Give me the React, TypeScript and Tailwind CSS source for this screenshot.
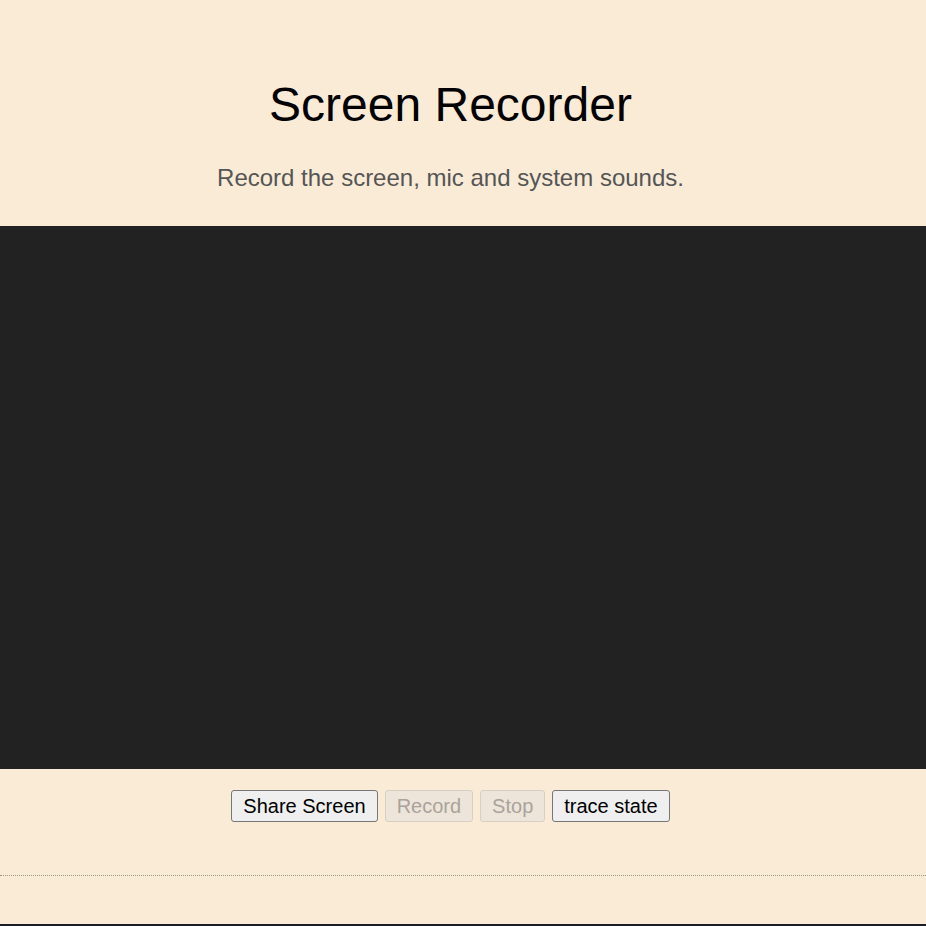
export default function App() {
    const btn = "h-[32px] px-[11px] text-[20px] rounded-[3px] border leading-none";
    return (
        <div className="min-h-[926px] h-[926px] bg-[#faebd7] flex flex-col overflow-hidden" style={{ fontFamily: '"Liberation Sans", Arial, sans-serif' }}>
            {/* Header */}
            <div className="w-[901px] text-center">
                <h1 className="mt-[77px] text-[48px] leading-[55px] text-black">Screen Recorder</h1>
                <p className="mt-[32px] text-[24px] leading-[28px] text-[#555]">Record the screen, mic and system sounds.</p>
            </div>

            {/* Video preview */}
            <div className="mt-[34px] h-[543px] w-full bg-[#222222]"></div>

            {/* Controls */}
            <div className="w-[901px] mt-[21px] flex justify-center gap-[7px]">
                <button className={`${btn} bg-[#efefef] border-[#767676] text-black`}>Share Screen</button>
                <button disabled className={`${btn} bg-[#ede5d9] border-[#d8cfc4] text-[#a9a39c]`}>Record</button>
                <button disabled className={`${btn} bg-[#ede5d9] border-[#d8cfc4] text-[#a9a39c]`}>Stop</button>
                <button className={`${btn} bg-[#efefef] border-[#767676] text-black`}>trace state</button>
            </div>

            <hr className="mt-[53px] border-0 border-t border-dotted border-[#9e948a]" />

            <div className="flex-1"></div>
            <div className="h-[2px] bg-[#1c1c28]"></div>
        </div>
    );
}
